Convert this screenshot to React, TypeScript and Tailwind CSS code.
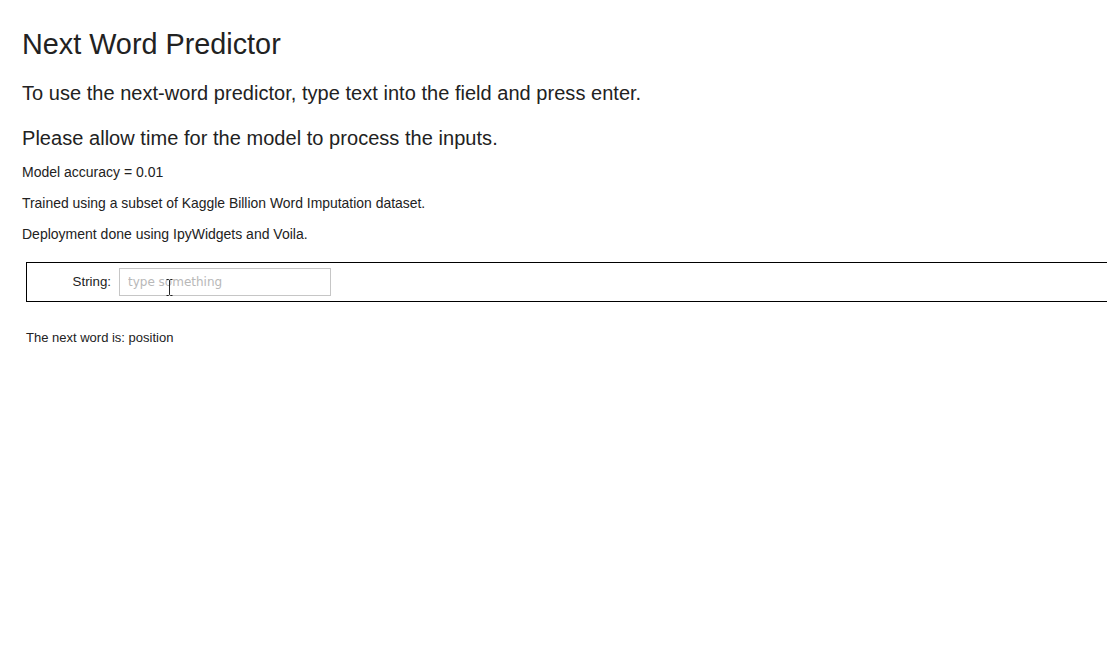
import React from "react";

export default function App() {
  return (
    <div
      className="min-h-[663px] bg-white text-[#222] pl-[22px] pt-[26px]"
      style={{ fontFamily: '"Liberation Sans", Arial, sans-serif' }}
    >
      <h1 className="text-[28.8px] leading-[36px] text-[#222]">Next Word Predictor</h1>
      <p className="text-[20px] leading-[24px] mt-[19px] tracking-[0.03px]">
        To use the next-word predictor, type text into the field and press enter.
      </p>
      <p className="text-[20px] leading-[24px] mt-[21px] tracking-[0.04px]">
        Please allow time for the model to process the inputs.
      </p>
      <p className="text-[14px] leading-[18px] mt-[13px]">Model accuracy = 0.01</p>
      <p className="text-[13.93px] leading-[18px] mt-[13px]">
        Trained using a subset of Kaggle Billion Word Imputation dataset.
      </p>
      <p className="text-[14px] leading-[18px] mt-[13px]">
        Deployment done using IpyWidgets and Voila.
      </p>
      <div className="ml-[4px] mt-[19px] border-y border-l border-black h-[40px] flex items-center">
        <label className="w-[92px] text-right text-[13.3px] text-[#222] pr-[8px]">String:</label>
        <div className="relative">
          <input
            placeholder="type something"
            className="w-[212px] h-[28px] border border-[#c6c6c6] px-[8px] text-[12px] outline-none placeholder:text-[#b8b8b8]"
            style={{ fontFamily: '"DejaVu Sans", sans-serif' }}
          />
          <svg
            className="absolute left-[47px] top-[11px]"
            width="7"
            height="17"
            viewBox="0 0 7 17"
          >
            <path d="M0.5 0.5h2l1 1 1-1h2M3.5 1.5v14M0.5 16.5h2l1-1 1 1h2" stroke="#222" strokeWidth="1" fill="none" />
          </svg>
        </div>
      </div>
      <p className="ml-[4px] mt-[28px] text-[13px] leading-[16px]">The next word is: position</p>
    </div>
  );
}
